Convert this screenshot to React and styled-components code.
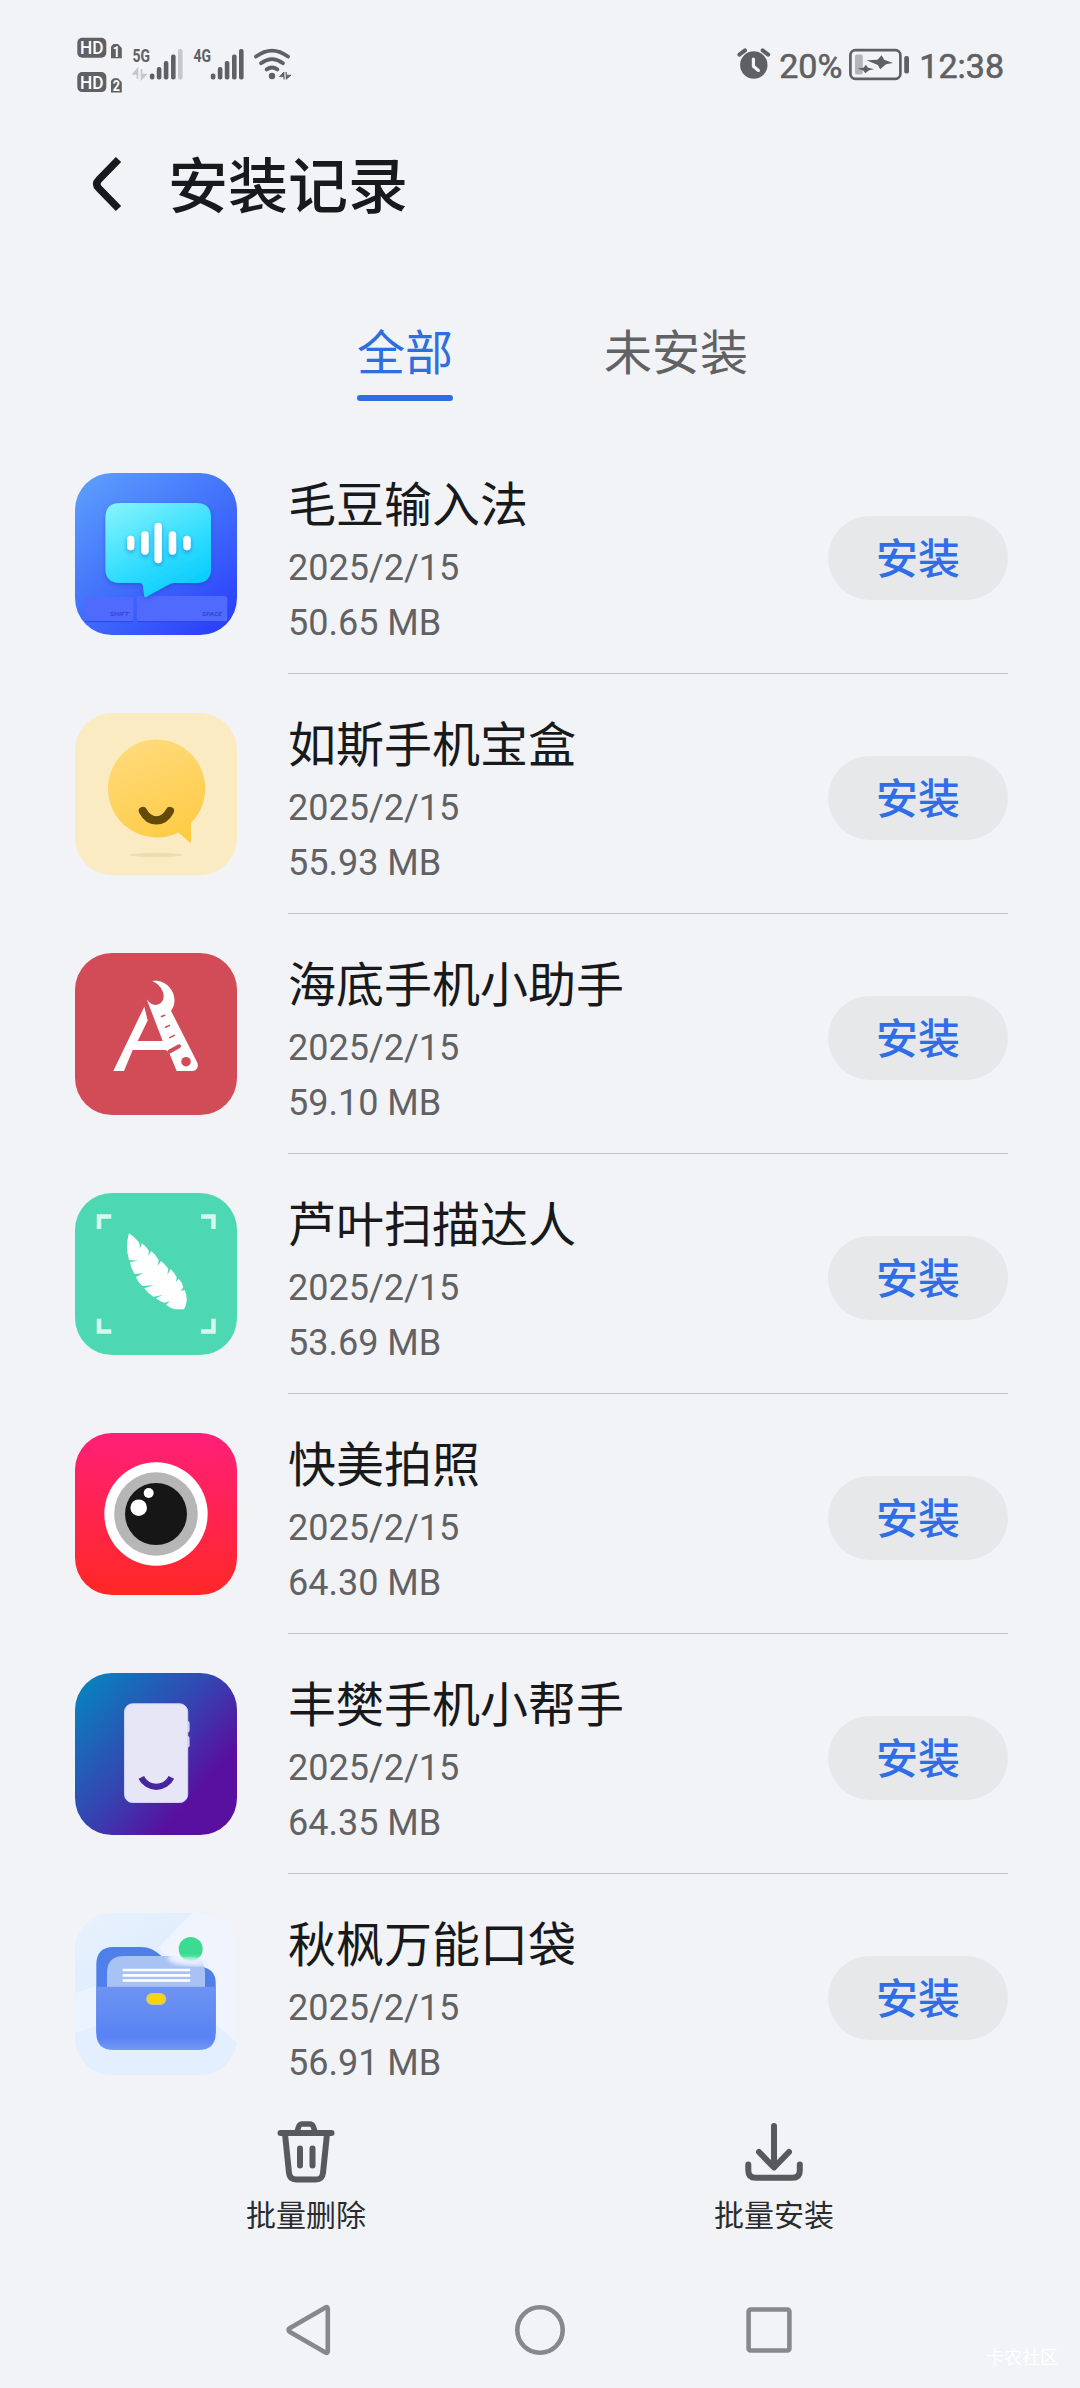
import { useState } from "react";
import styled, { createGlobalStyle } from "styled-components";

const GlobalStyle = createGlobalStyle`
  * {
    box-sizing: border-box;
  }
  body {
    margin: 0;
    background-color: #f1f3f7;
    font-family: Roboto, "Noto Sans CJK SC", sans-serif;
  }
`;

const Screen = styled.div`
  display: flex;
  flex-direction: column;
  width: 1080px;
  height: 2388px;
  overflow: hidden;
  background-color: #f1f3f7;
`;

const StatusBar = styled.div`
  display: flex;
  justify-content: space-between;
  height: 130px;
  padding: 37px 76px 0 77px;
`;

const StatusGroup = styled.div`
  display: flex;
  align-items: flex-start;
`;

const StatusIcon = styled.svg`
  display: block;
  flex: none;
  margin: ${(props) => props.$margin || "0"};
  overflow: visible;
`;

const StatusText = styled.span`
  margin-top: 9px;
  font-size: 34px;
  line-height: 40px;
  color: #5f6062;
  -webkit-text-stroke: 0.6px #5f6062;
`;

const Header = styled.header`
  display: flex;
  align-items: center;
  gap: 45px;
  height: 108px;
  padding-left: 90px;
`;

const BackButton = styled.button`
  display: flex;
  padding: 0;
  border: none;
  background: none;
`;

const Title = styled.h1`
  margin: 0;
  padding-bottom: 5px;
  font-family: "Noto Sans CJK SC", sans-serif;
  font-size: 60px;
  font-weight: 500;
  line-height: 72px;
  color: #18191b;
`;

const Tabs = styled.nav`
  display: flex;
  gap: 151px;
  height: 196px;
  padding: 78px 0 0 357px;
`;

const Tab = styled.button`
  height: 85px;
  padding: 0;
  border: none;
  background: none;
  font-family: "Noto Sans CJK SC", sans-serif;
  font-size: 48px;
  line-height: 66px;
  color: ${(props) => (props.$active ? "#2f6ee0" : "#616264")};

  &::after {
    content: "";
    display: block;
    height: 6px;
    margin-top: 13px;
    border-radius: 3px;
    background-color: ${(props) => (props.$active ? "#2f6ee0" : "transparent")};
  }
`;

const List = styled.ul`
  height: 1664px;
  margin: 0;
  padding: 0 72px 0 75px;
  list-style: none;
  overflow: hidden;
`;

const Row = styled.li`
  display: flex;
  align-items: center;
  gap: 51px;
  height: 240px;
`;

const AppIcon = styled.svg`
  display: block;
  flex: none;
  width: 162px;
  height: 162px;
  border-radius: 37px;
`;

const RowBody = styled.div`
  display: flex;
  flex: 1;
  align-items: center;
  justify-content: space-between;
  height: 240px;
  padding-top: 8px;
  border-bottom: 1px solid #c0c3c9;
`;

const AppName = styled.div`
  margin-bottom: 4px;
  font-family: "Noto Sans CJK SC", sans-serif;
  font-size: 48px;
  line-height: 72px;
  color: #18191b;
`;

const Detail = styled.div`
  font-size: 36px;
  line-height: 55px;
  color: #616264;
`;

const InstallButton = styled.button`
  width: 180px;
  height: 84px;
  padding: 0 0 4px;
  border: none;
  border-radius: 42px;
  background-color: #e7e8ea;
  font-family: "Noto Sans CJK SC", sans-serif;
  font-size: 42px;
  font-weight: 500;
  color: #2f6ee8;
`;

const Toolbar = styled.div`
  display: flex;
  height: 170px;
  padding: 17px 72px 0;
`;

const ToolButton = styled.button`
  display: flex;
  flex: 1;
  flex-direction: column;
  align-items: center;
  padding: 0;
  border: none;
  background: none;
  font-family: "Noto Sans CJK SC", sans-serif;
  font-size: 30px;
  line-height: 44px;
  color: #2a2b2d;

  svg {
    margin-bottom: 4px;
  }
`;

const SystemNav = styled.div`
  position: relative;
  display: grid;
  grid-template-columns: repeat(3, 230px);
  justify-content: center;
  justify-items: center;
  height: 120px;
  padding-top: 32px;
`;

const Watermark = styled.span`
  position: absolute;
  right: 22px;
  bottom: 16px;
  font-size: 18px;
  line-height: 28px;
  color: #fff;
`;

const GREY = "#5f6062";

const BARS = [
  { x: 20, y: 25.5 },
  { x: 27, y: 19 },
  { x: 34, y: 13 },
  { x: 41.2, y: 6.5 },
  { x: 48.2, y: 1 },
];

function HdBadges() {
  return (
    <StatusIcon width="46" height="56" viewBox="0 0 46 56">
      {[1, 2].map((n) => (
        <g key={n} transform={`translate(0 ${(n - 1) * 34.3})`}>
          <rect x="0.3" y="0.8" width="29" height="20" rx="5" fill={GREY} />
          <text x="3" y="17.4" fontSize="18.5" fontWeight="500" fill="#fff" textLength="23.5" lengthAdjust="spacingAndGlyphs">
            HD
          </text>
          <path d="M34 9.5L36.5 7H41l3.800 4v10.300H34z" fill={GREY} />
          <text x="35.8" y="19.6" fontSize="14" fontWeight="700" fill="#fff" textLength="7.2" lengthAdjust="spacingAndGlyphs">
            {n}
          </text>
        </g>
      ))}
    </StatusIcon>
  );
}

function Signal({ label, level, arrows }) {
  return (
    <StatusIcon width="52" height="33" viewBox="0 0 52 33" $margin="11px 0 0 9px">
      <text x="0.4" y="14" fontSize="18.5" fontWeight="700" fill={GREY} textLength="17.5" lengthAdjust="spacingAndGlyphs">
        {label}
      </text>
      {arrows && <path d="M5.500 31V21L1.200 26H5.500M9.500 21v10L14 26.500H9.500" fill="#c6c7ca" stroke="#c6c7ca" strokeWidth="1.600" />}
      {BARS.map((bar, i) => (
        <rect key={i} x={bar.x - 2.2} y={bar.y} width="4.6" height={31.5 - bar.y} rx="2" fill={i < level ? GREY : "#c6c7ca"} />
      ))}
    </StatusIcon>
  );
}

function Wifi() {
  return (
    <StatusIcon width="40" height="33" viewBox="0 0 40 33" $margin="11px 0 0 8px">
      <g fill="none" stroke={GREY} strokeWidth="3.8" strokeLinecap="round">
        <path d="M3 8.600Q19 -3.400 35 8.600" />
        <path d="M8 15.200Q19 7 30 15.200" />
        <path d="M13.600 21.400Q19 17.600 24.400 21.400" />
      </g>
      <circle cx="19" cy="28" r="3.2" fill={GREY} />
      <path d="M31 31.300V24L26.500 28.600H31zM33.200 24v7.300L38 27.200H33.200z" fill={GREY} stroke={GREY} strokeWidth="0.8" />
    </StatusIcon>
  );
}

function Alarm() {
  return (
    <StatusIcon width="34" height="33" viewBox="0 0 34 33" $margin="11px 8px 0 0">
      <circle cx="16.8" cy="17" r="13.7" fill={GREY} />
      <g fill="none" strokeLinecap="round" strokeLinejoin="round">
        <path d="M2.400 6.600L8 2.400M31.200 6.600L25.600 2.400" stroke={GREY} strokeWidth="4" />
        <path d="M16.400 11.200v7l5 4.200" stroke="#f1f3f7" strokeWidth="3.2" />
      </g>
    </StatusIcon>
  );
}

function Battery() {
  return (
    <StatusIcon width="62" height="33" viewBox="0 0 62 33" $margin="11px 9px 0 6px">
      <rect x="2.4" y="2.2" width="50" height="28.6" rx="5" fill="none" stroke={GREY} strokeWidth="2.7" />
      <rect x="56.2" y="8" width="4.8" height="17.4" rx="2" fill={GREY} />
      <rect x="7" y="6.4" width="7.8" height="20" rx="2" fill="#b4b5b8" />
      <path d="M18.500 12.200L29.500 11.800 33.600 7.300 36.200 11.800 45 14.900 38 16.200 32.200 21.200 29.800 17z" fill={GREY} />
      <path d="M9.300 20.600L15.500 19.800 17.900 16.800 19.700 19.600 26 21.200 21 22.300 17.300 25.200 15.300 22.600z" fill={GREY} />
    </StatusIcon>
  );
}

function KeyboardIcon() {
  return (
    <AppIcon viewBox="0 0 162 162">
      <defs>
        <linearGradient id="kbBg" x1="0.1" y1="0" x2="0.9" y2="1">
          <stop offset="0" stopColor="#5c9dfd" />
          <stop offset="0.5" stopColor="#4170fb" />
          <stop offset="1" stopColor="#2a3dfb" />
        </linearGradient>
        <linearGradient id="kbBubble" x1="0.1" y1="0" x2="0.7" y2="1">
          <stop offset="0" stopColor="#84f3fd" />
          <stop offset="0.6" stopColor="#30dcfe" />
          <stop offset="1" stopColor="#08ccfe" />
        </linearGradient>
        <filter id="kbShadow" x="-20%" y="-20%" width="140%" height="140%">
          <feDropShadow dx="0" dy="2" stdDeviation="2" floodColor="#1b3fc4" floodOpacity="0.5" />
        </filter>
      </defs>
      <rect width="162" height="162" fill="url(#kbBg)" />
      <g fill="#4f6afd">
        <rect x="9.5" y="124" width="49" height="24.5" rx="3" />
        <rect x="61.8" y="123" width="90.5" height="25.5" rx="3" />
      </g>
      <path d="M10 148.600h48M62.500 148.600h89" stroke="#2f45e0" strokeWidth="1" />
      <g fontSize="6" fontWeight="700" fontStyle="italic" fill="#3547d8">
        <text x="35" y="143" textLength="19" lengthAdjust="spacingAndGlyphs">SHIFT</text>
        <text x="127" y="143" textLength="20" lengthAdjust="spacingAndGlyphs">SPACE</text>
      </g>
      <path
        d="M45 30h76.500q14.500 0 14.500 14.500v51q0 14.500-14.500 14.500H99q-3 0-6 2L72 123.500q-3 1.500-3-1.500l-1-9q-.5-3-3.500-3H45q-14.600 0-14.600-14.500v-51Q30.400 30 45 30z"
        fill="url(#kbBubble)"
        filter="url(#kbShadow)"
      />
      <g stroke="#fff" strokeWidth="7.4" strokeLinecap="round" filter="url(#kbShadow)">
        <path d="M55.700 66.500v7M70 62v16M83.200 53.500v33M97.500 62v16M112 66.500v7" />
      </g>
    </AppIcon>
  );
}

function SmileBubbleIcon() {
  return (
    <AppIcon viewBox="0 0 162 162">
      <defs>
        <linearGradient id="smile" x1="0.3" y1="0" x2="0.7" y2="1">
          <stop offset="0" stopColor="#ffda7c" />
          <stop offset="1" stopColor="#fecb43" />
        </linearGradient>
      </defs>
      <rect width="162" height="162" fill="#fbebc2" />
      <path
        d="M81.300 26.500a49 49 0 0 1 34.700 83.500v18.500q0 2-1.800.6L103.500 119.500A49 49 0 1 1 81.300 26.500z"
        fill="url(#smile)"
      />
      <path d="M67.900 98c6.500 12.500 20.500 12.500 27 0" fill="none" stroke="#634a08" strokeWidth="8.2" strokeLinecap="round" />
      <ellipse cx="81" cy="142" rx="26" ry="2.200" fill="#eedbb0" />
    </AppIcon>
  );
}

function ToolsIcon() {
  return (
    <AppIcon viewBox="0 0 162 162">
      <rect width="162" height="162" fill="#d24c57" />
      <path
        d="M38.300 118L69.300 53.700 72.700 67.500 62.700 88H87.700L71.700 46.300C75 51 79 53 83 51.500C88.500 49.500 90 43.500 87.500 38C85.500 33.500 82 30 77.300 28C88 26 99.500 35 99.500 47C99.500 51 98.500 54.500 96 57.700L122 109C124 113 122.500 118 117 118H101.700L94.500 100.500L91 97H57.700L49 118z"
        fill="#fff"
      />
      <g stroke="#d24c57" strokeLinecap="round">
        <path d="M94.500 98.500l9.500-5.200" strokeWidth="4" />
        <path d="M86.500 63.500l3.200-1.200M90.500 74.300l4-1.900M94.800 84.700l4.500-2.400" strokeWidth="1.500" />
      </g>
      <circle cx="111" cy="108.700" r="4.800" fill="#d24c57" />
    </AppIcon>
  );
}

function FeatherIcon() {
  return (
    <AppIcon viewBox="0 0 162 162">
      <rect width="162" height="162" fill="#4dd8b3" />
      <path
        d="M24 36V23.600H36.300M126 23.600h12.500V36M24 125.700v12.700H36.300M126 138.400h12.500v-12.700"
        fill="none"
        stroke="#d6f8ef"
        strokeWidth="4.500"
      />
      <path
        d="M54 40.300Q60 44 64.300 49.700L65 55.700 66.700 50.300Q71 53 74 57.700L73.300 63 76.300 58Q81 62 83.700 67L82.700 73 86 68Q90 71 93.300 75.700L92.300 81.700 95.700 76.300Q99 79 101.700 84.300L101 89 103.700 85.700Q107 89 108.300 94.300L105.700 98 109.700 97Q112 102 111.700 108Q111 113 109 116.300H100Q95 115 91 111.700L95 108.300 89 109.700Q85 108.500 81 105.300L87.700 102 78.300 103.700Q73 100.500 69.300 95.300L79 92 67.700 93Q63 89.500 61 83.700L68.300 80.300 59.700 81Q56 75.500 55 69L63.700 67.700 54 67Q50 53 54 40.300z"
        fill="#fff"
      />
    </AppIcon>
  );
}

function CameraIcon() {
  return (
    <AppIcon viewBox="0 0 162 162">
      <defs>
        <linearGradient id="camBg" x1="0.5" y1="0" x2="0.45" y2="1">
          <stop offset="0" stopColor="#ff1f78" />
          <stop offset="1" stopColor="#ff2825" />
        </linearGradient>
      </defs>
      <rect width="162" height="162" fill="url(#camBg)" />
      <circle cx="81" cy="81" r="51.700" fill="#fff" />
      <circle cx="81" cy="81" r="41.800" fill="#b6b6b6" />
      <circle cx="81" cy="81" r="31" fill="#161616" />
      <circle cx="63.700" cy="74.700" r="8.300" fill="#fff" />
      <circle cx="73.700" cy="60" r="5" fill="#fff" />
    </AppIcon>
  );
}

function PhoneIcon() {
  return (
    <AppIcon viewBox="0 0 162 162">
      <defs>
        <linearGradient id="phBg" x1="0.05" y1="0.1" x2="0.85" y2="0.8">
          <stop offset="0" stopColor="#0a7fbd" />
          <stop offset="0.5" stopColor="#3347b2" />
          <stop offset="0.9" stopColor="#590f9f" />
        </linearGradient>
      </defs>
      <rect width="162" height="162" fill="url(#phBg)" />
      <rect x="109" y="48" width="5.600" height="11.500" rx="2" fill="#d6d4f6" />
      <rect x="109" y="63" width="5.600" height="11.500" rx="2" fill="#d6d4f6" />
      <rect x="49.500" y="30.800" width="63.200" height="98.700" rx="8" fill="#e7e6f6" stroke="#cfd3f8" />
      <path d="M66.300 104.300a16.600 16.600 0 0 0 30 0" fill="none" stroke="#46259f" strokeWidth="6.200" />
    </AppIcon>
  );
}

function FolderIcon() {
  return (
    <AppIcon viewBox="0 0 162 162">
      <defs>
        <linearGradient id="fdFront" x1="0" y1="0" x2="0" y2="1">
          <stop offset="0" stopColor="#6d94f2" />
          <stop offset="0.8" stopColor="#5882f4" />
          <stop offset="1" stopColor="#7598f2" />
        </linearGradient>
        <linearGradient id="fdRay" x1="0" y1="0" x2="0.8" y2="1">
          <stop offset="0" stopColor="#e9f2fd" />
          <stop offset="1" stopColor="#dceafd" />
        </linearGradient>
        <linearGradient id="fdDot" x1="0" y1="0" x2="0" y2="1">
          <stop offset="0.7" stopColor="#3bdc92" />
          <stop offset="1" stopColor="#8eeac0" />
        </linearGradient>
        <filter id="fdBlur">
          <feGaussianBlur stdDeviation="2" />
        </filter>
      </defs>
      <rect width="162" height="162" fill="#e3effe" />
      <path d="M0 0H117L84 34 50 60 0 85z" fill="url(#fdRay)" />
      <path d="M117 0H162V130L128 100 84 34z" fill="#eff4fd" />
      <path d="M0 80L60 60V100L0 120z" fill="#ebf3fe" />
      <path
        d="M21.300 120V52q0-18 17-18H66c8 0 13 3 18 7c9 8 17 11 30 11.500c18 0 26.700 5 26.700 17V120z"
        fill="#4f7fe8"
      />
      <path d="M32 74V60q0-17 17-17h63q18 0 18 17V74z" fill="#a9c2f4" />
      <ellipse cx="112" cy="45" rx="19" ry="6" fill="#f0f5fe" filter="url(#fdBlur)" />
      <circle cx="115.700" cy="36" r="12" fill="url(#fdDot)" />
      <path d="M96 48q17-5 35 0v5q-21 0-35-5z" fill="#e4edfc" filter="url(#fdBlur)" />
      <path d="M47.700 57h67.500M47.700 62.300h67.500M47.700 67.500h67.500" stroke="#fff" strokeWidth="2.700" />
      <path d="M21.300 73.700H140.700V120q0 17-17 17H38.300q-17 0-17-17z" fill="url(#fdFront)" />
      <rect x="71.700" y="80.500" width="19" height="11" rx="5.500" fill="#fbd20c" stroke="#c9c79a" strokeWidth="1.200" />
    </AppIcon>
  );
}

const APPS = [
  { name: "毛豆输入法", size: "50.65 MB", Icon: KeyboardIcon },
  { name: "如斯手机宝盒", size: "55.93 MB", Icon: SmileBubbleIcon },
  { name: "海底手机小助手", size: "59.10 MB", Icon: ToolsIcon },
  { name: "芦叶扫描达人", size: "53.69 MB", Icon: FeatherIcon },
  { name: "快美拍照", size: "64.30 MB", Icon: CameraIcon },
  { name: "丰樊手机小帮手", size: "64.35 MB", Icon: PhoneIcon },
  { name: "秋枫万能口袋", size: "56.91 MB", Icon: FolderIcon },
];

const TABS = ["全部", "未安装"];

export default function App() {
  const [tab, setTab] = useState(TABS[0]);

  return (
    <Screen>
      <GlobalStyle />
      <StatusBar>
        <StatusGroup>
          <HdBadges />
          <Signal label="5G" level={4} arrows />
          <Signal label="4G" level={5} />
          <Wifi />
        </StatusGroup>
        <StatusGroup>
          <Alarm />
          <StatusText>20%</StatusText>
          <Battery />
          <StatusText>12:38</StatusText>
        </StatusGroup>
      </StatusBar>

      <Header>
        <BackButton>
          <svg width="33" height="56" viewBox="0 0 33 56">
            <path d="M28.500 3.500L9 23.500q-4.500 4.500 0 9L28.500 52.500" fill="none" stroke="#18191b" strokeWidth="7.4" />
          </svg>
        </BackButton>
        <Title>安装记录</Title>
      </Header>

      <Tabs>
        {TABS.map((name) => (
          <Tab key={name} $active={name === tab} onClick={() => setTab(name)}>
            {name}
          </Tab>
        ))}
      </Tabs>

      <List>
        {APPS.map(({ name, size, Icon }) => (
          <Row key={name}>
            <Icon />
            <RowBody>
              <div>
                <AppName>{name}</AppName>
                <Detail>2025/2/15</Detail>
                <Detail>{size}</Detail>
              </div>
              <InstallButton>安装</InstallButton>
            </RowBody>
          </Row>
        ))}
      </List>

      <Toolbar>
        <ToolButton>
          <svg width="72" height="72" viewBox="0 0 72 72" fill="none" stroke="#58595b" strokeWidth="6" strokeLinecap="round" strokeLinejoin="round">
            <path d="M10.500 18h51" />
            <path d="M27 17l1.500-5q1-3 4-3h7q3 0 4 3l1.500 5" strokeWidth="5.500" />
            <path d="M15 19l4 39q.8 6.500 7 6.500h20q6.200 0 7-6.500l4-39" strokeLinecap="butt" />
            <path d="M30 33.500v17M42.500 33.500v17" />
          </svg>
          批量删除
        </ToolButton>
        <ToolButton>
          <svg width="72" height="72" viewBox="0 0 72 72" fill="none" stroke="#58595b" strokeWidth="6" strokeLinecap="round" strokeLinejoin="round">
            <path d="M36 11v40" />
            <path d="M21 37l15 15.500 15-15.500" />
            <path d="M10.300 49.500v6q0 7.300 7.500 7.300h36.500q7.500 0 7.500-7.300v-6" />
          </svg>
          批量安装
        </ToolButton>
      </Toolbar>

      <SystemNav>
        <svg width="60" height="60" viewBox="0 0 60 60" fill="none" stroke="#87888a" strokeWidth="4.600" strokeLinejoin="round">
          <path d="M45.500 7.500q2.300-1.300 2.300 1.300v42.400q0 2.600-2.300 1.300L10 32q-3-2 0-4z" />
        </svg>
        <svg width="60" height="60" viewBox="0 0 60 60" fill="none" stroke="#87888a" strokeWidth="4.600">
          <circle cx="30" cy="30" r="22.700" />
        </svg>
        <svg width="60" height="60" viewBox="0 0 60 60" fill="none" stroke="#87888a" strokeWidth="4.600">
          <rect x="8.600" y="9.500" width="40.800" height="41" rx="2" />
        </svg>
        <Watermark>卡农社区</Watermark>
      </SystemNav>
    </Screen>
  );
}
